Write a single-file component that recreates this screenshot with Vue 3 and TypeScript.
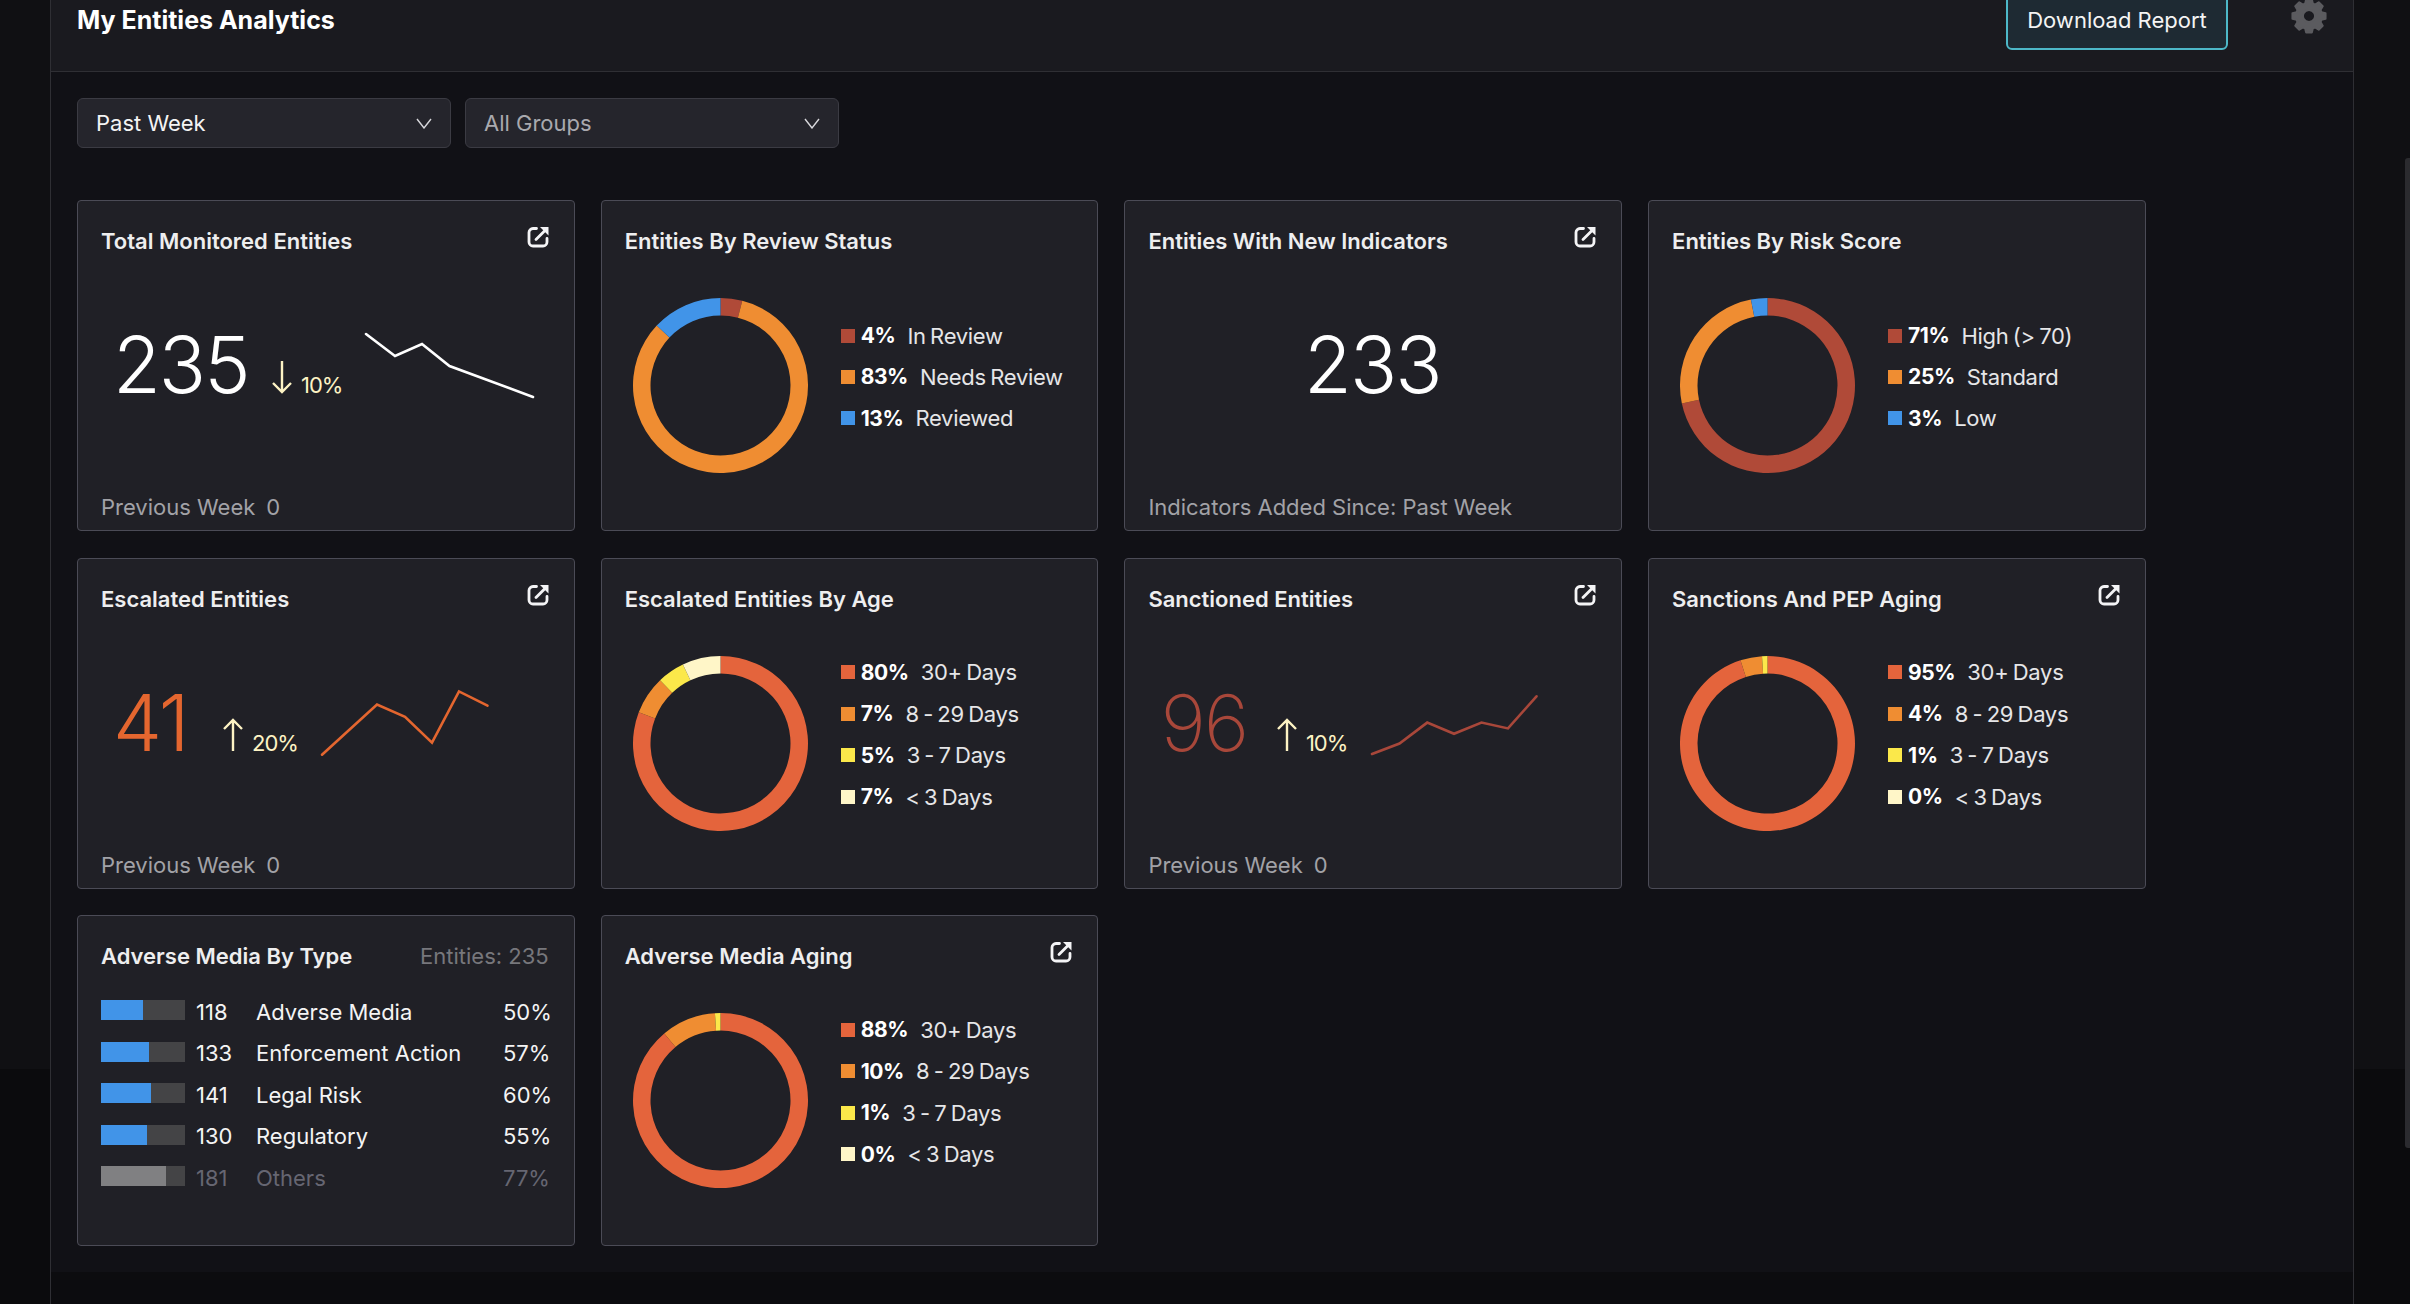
<template>
  <div class="page">
    <div class="panel">
      <header class="panel-head">
        <h1 class="page-title">My Entities Analytics</h1>
        <button class="download">Download Report</button>
        <svg class="gear" viewBox="0 0 36 36" width="36" height="36">
          <path
            fill="#5b5b5f"
            stroke="#5b5b5f"
            stroke-width="2"
            stroke-linejoin="round"
            fill-rule="evenodd"
            :d="gearPath()"
          />
        </svg>
      </header>

      <div class="content">
        <div class="filters">
          <div v-for="f in filters" :key="f.label" class="select" :class="{ muted: f.muted }">
            <span>{{ f.label }}</span>
            <svg viewBox="0 0 16 11" width="16" height="11">
              <path d="M1 1l7 9 7-9" fill="none" stroke="#d8d8dc" stroke-width="1.400" />
            </svg>
          </div>
        </div>

        <div class="grid">
          <section v-for="card in cards" :key="card.title" class="card">
            <div class="card-head">
              <h2 class="card-title">{{ card.title }}</h2>
              <span v-if="card.kind === 'bars'" class="entities">{{ card.note }}</span>
              <svg v-else-if="card.link" class="ext" viewBox="0 0 22 22" width="22" height="22">
                <path
                  d="M9.500 2.500H6A4 4 0 0 0 2 6.500V16a4 4 0 0 0 4 4h10a4 4 0 0 0 4-4v-3.500"
                  fill="none"
                  stroke="#f4f4f6"
                  stroke-width="2.800"
                  stroke-linecap="round"
                />
                <path d="M9 13.500L18 4.500" fill="none" stroke="#f4f4f6" stroke-width="2.800" stroke-linecap="round" />
                <path d="M13 1H21.500V9.500z" fill="#f4f4f6" />
              </svg>
            </div>

            <div v-if="card.kind === 'stat'" class="stat" :style="statColumns(card)">
              <span class="big" :style="{ color: card.color, fontWeight: card.weight }">{{ card.value }}</span>
              <span v-if="card.delta" class="delta">
                <svg viewBox="0 0 22 34" width="22" height="34">
                  <path
                    :d="card.up ? 'M11 33V2M2 11l9-9 9 9' : 'M11 1v31M2 23l9 9 9-9'"
                    fill="none"
                    stroke="#fdf3c4"
                    stroke-width="2.400"
                  />
                </svg>
                <span class="delta-text">{{ card.delta }}</span>
              </span>
              <svg v-if="card.spark" :width="card.sparkW" height="90" class="spark">
                <polyline
                  :points="card.spark"
                  fill="none"
                  :stroke="card.sparkColor"
                  stroke-width="2.600"
                  stroke-linecap="round"
                />
              </svg>
            </div>

            <div v-if="card.kind === 'center'" class="center-num">{{ card.value }}</div>

            <div v-if="card.kind === 'donut'" class="donut-body">
              <svg class="donut" viewBox="0 0 175 175" width="175" height="175">
                <path
                  v-for="(s, i) in card.segments"
                  :key="i"
                  v-show="s.pct > 0"
                  :d="arcPath(card, i)"
                  :fill="s.color"
                />
              </svg>
              <ul class="legend">
                <li v-for="s in card.segments" :key="s.label">
                  <i class="swatch" :style="{ background: s.color }"></i>
                  <b>{{ s.pct }}%</b>
                  <span>{{ s.label }}</span>
                </li>
              </ul>
            </div>

            <ul v-if="card.kind === 'bars'" class="bars">
              <li v-for="b in card.bars" :key="b.label" :class="{ dim: b.dim }">
                <span class="track"><span class="fill" :style="{ width: b.pct + '%' }"></span></span>
                <span class="count">{{ b.count }}</span>
                <span class="bar-label">{{ b.label }}</span>
                <span class="bar-pct">{{ b.pct }}%</span>
              </li>
            </ul>

            <p v-if="card.foot" class="foot">
              {{ card.foot }}<span v-if="card.footNum" class="foot-num">{{ card.footNum }}</span>
            </p>
          </section>
        </div>
      </div>
    </div>
    <div class="scroll-thumb"></div>
  </div>
</template>

<script setup lang="ts">
  interface Segment {
    pct: number;
    label: string;
    color: string;
  }

  interface Bar {
    count: number;
    label: string;
    pct: number;
    dim?: boolean;
  }

  interface Card {
    title: string;
    kind: "stat" | "center" | "donut" | "bars";
    link?: boolean;
    value?: string;
    color?: string;
    weight?: number;
    delta?: string;
    up?: boolean;
    spark?: string;
    sparkW?: number;
    sparkColor?: string;
    numW?: number;
    deltaW?: number;
    foot?: string;
    footNum?: string;
    note?: string;
    segments?: Segment[];
    bars?: Bar[];
  }

  const RED = "#b04a38";
  const ORANGE = "#ef8d32";
  const BLUE = "#4194e8";
  const CORAL = "#e4643c";
  const YELLOW = "#fbe84a";
  const CREAM = "#fff6c8";

  const filters = [
    { label: "Past Week", muted: false },
    { label: "All Groups", muted: true },
  ];

  function ages(a: number, b: number, c: number, d: number): Segment[] {
    return [
      { pct: a, label: "30+ Days", color: CORAL },
      { pct: b, label: "8 - 29 Days", color: ORANGE },
      { pct: c, label: "3 - 7 Days", color: YELLOW },
      { pct: d, label: "< 3 Days", color: CREAM },
    ];
  }

  const cards: Card[] = [
    {
      title: "Total Monitored Entities",
      kind: "stat",
      link: true,
      value: "235",
      color: "#ffffff",
      delta: "10%",
      up: false,
      spark: "3,14 32,36 59,24 86.5,46 170,77",
      sparkW: 174,
      sparkColor: "#ffffff",
      numW: 170,
      deltaW: 92,
      foot: "Previous Week",
      footNum: "0",
    },
    {
      title: "Entities By Review Status",
      kind: "donut",
      segments: [
        { pct: 4, label: "In Review", color: RED },
        { pct: 83, label: "Needs Review", color: ORANGE },
        { pct: 13, label: "Reviewed", color: BLUE },
      ],
    },
    {
      title: "Entities With New Indicators",
      kind: "center",
      link: true,
      value: "233",
      foot: "Indicators Added Since: Past Week",
    },
    {
      title: "Entities By Risk Score",
      kind: "donut",
      segments: [
        { pct: 71, label: "High (> 70)", color: RED },
        { pct: 25, label: "Standard", color: ORANGE },
        { pct: 3, label: "Low", color: BLUE },
      ],
    },
    {
      title: "Escalated Entities",
      kind: "stat",
      link: true,
      value: "41",
      color: "#e4662f",
      delta: "20%",
      up: true,
      spark: "3,76.700 58,26.600 86,38.800 113,64.600 140,13.400 168.500,27.600",
      sparkW: 172,
      sparkColor: "#e4662f",
      numW: 121,
      deltaW: 97,
      foot: "Previous Week",
      footNum: "0",
    },
    { title: "Escalated Entities By Age", kind: "donut", segments: ages(80, 7, 5, 7) },
    {
      title: "Sanctioned Entities",
      kind: "stat",
      link: true,
      value: "96",
      color: "#a8473a",
      weight: 200,
      delta: "10%",
      up: true,
      spark: "3,76 30.500,65.500 58.200,44.600 85,55.800 112.500,44.600 139,50.400 167.500,18.300",
      sparkW: 171,
      sparkColor: "#a8473a",
      numW: 127.5,
      deltaW: 93,
      foot: "Previous Week",
      footNum: "0",
    },
    { title: "Sanctions And PEP Aging", kind: "donut", link: true, segments: ages(95, 4, 1, 0) },
    {
      title: "Adverse Media By Type",
      kind: "bars",
      note: "Entities: 235",
      bars: [
        { count: 118, label: "Adverse Media", pct: 50 },
        { count: 133, label: "Enforcement Action", pct: 57 },
        { count: 141, label: "Legal Risk", pct: 60 },
        { count: 130, label: "Regulatory", pct: 55 },
        { count: 181, label: "Others", pct: 77, dim: true },
      ],
    },
    { title: "Adverse Media Aging", kind: "donut", link: true, segments: ages(88, 10, 1, 0) },
  ];

  function statColumns(card: Card) {
    return { gridTemplateColumns: `${card.numW}px ${card.deltaW}px auto` };
  }

  // eight-toothed cog with a round hole, centred in its 36 box
  function gearPath(): string {
    const pts: string[] = [];
    for (let i = 0; i < 8; i++) {
      const mid = (i * Math.PI) / 4;
      const corners: [number, number][] = [
        [13, -0.3],
        [16.8, -0.17],
        [16.8, 0.17],
        [13, 0.3],
      ];
      for (const [r, off] of corners) {
        const a = mid + off;
        pts.push(`${(18 + r * Math.sin(a)).toFixed(2)} ${(18 - r * Math.cos(a)).toFixed(2)}`);
      }
    }
    return `M ${pts.join(" L ")} Z M 18 12 a 6 6 0 1 0 0.01 0 Z`;
  }

  // one ring segment, clockwise from 12 o'clock
  function arcPath(card: Card, index: number): string {
    const segs = card.segments ?? [];
    const total = segs.reduce((sum, s) => sum + s.pct, 0);
    const before = segs.slice(0, index).reduce((sum, s) => sum + s.pct, 0);
    const a0 = (before / total) * Math.PI * 2;
    const a1 = ((before + segs[index].pct) / total) * Math.PI * 2;
    const C = 87.5;
    const R = 87.5;
    const r = 70;
    const pt = (rad: number, a: number) =>
      `${(C + rad * Math.sin(a)).toFixed(2)} ${(C - rad * Math.cos(a)).toFixed(2)}`;
    const large = a1 - a0 > Math.PI ? 1 : 0;
    return `M ${pt(R, a0)} A ${R} ${R} 0 ${large} 1 ${pt(R, a1)} L ${pt(r, a1)} A ${r} ${r} 0 ${large} 0 ${pt(r, a0)} Z`;
  }
</script>

<style>
  html,
  body {
    margin: 0;
    background: #0e0e11;
    overflow: hidden;
  }
</style>

<style scoped>
  .page {
    position: relative;
    height: 1304px;
    overflow: hidden;
    padding-left: 50px;
    box-sizing: border-box;
    background: linear-gradient(#101013 0, #101013 1069px, #0b0b0d 1069px);
    font-family: Inter, "Liberation Sans", sans-serif;
    color: #f2f2f4;
  }

  .panel {
    width: 2304px;
    height: 1304px;
    box-sizing: border-box;
    border-left: 1px solid #2f2f34;
    border-right: 1px solid #2f2f34;
    background: #0c0c0f;
  }

  .panel-head {
    height: 72px;
    box-sizing: border-box;
    display: flex;
    align-items: flex-start;
    padding: 0 26px;
    background: #1a1a1f;
    border-bottom: 1px solid #2f2f34;
  }

  .page-title {
    margin: 3px auto 0 0;
    font-size: 25px;
    line-height: 34px;
    font-weight: 700;
    color: #ffffff;
  }

  .download {
    width: 222px;
    height: 61px;
    margin: -11px 0 0;
    padding: 0;
    border: 2px solid #4db8c8;
    border-radius: 6px;
    background: #1e2a33;
    color: #f4f4f4;
    font: 400 22px Inter, "Liberation Sans", sans-serif;
  }

  .gear {
    margin: -2px 0 0 63px;
  }

  .content {
    box-sizing: border-box;
    height: 1200px;
    padding: 26px;
    background: #111116;
  }

  .filters {
    display: flex;
    gap: 14px;
    margin-bottom: 52px;
  }

  .select {
    width: 374px;
    height: 50px;
    box-sizing: border-box;
    display: flex;
    align-items: center;
    justify-content: space-between;
    padding: 0 18px 0 18px;
    background: #25252c;
    border: 1px solid #3b3b43;
    border-radius: 6px;
    font-size: 22px;
    color: #f4f4f4;
  }

  .select.muted {
    color: #a9a9ae;
  }

  .grid {
    display: grid;
    grid-template-columns: repeat(4, 497.7px);
    grid-auto-rows: 331px;
    gap: 26.5px 26px;
  }

  .card {
    display: flex;
    flex-direction: column;
    box-sizing: border-box;
    padding: 0 25px 0 23px;
    background: #202026;
    border: 1px solid #4b4b56;
    border-radius: 4px;
  }

  .card-head {
    display: flex;
    justify-content: space-between;
    align-items: flex-start;
    padding-top: 27px;
    height: 26px;
    flex: none;
    box-sizing: content-box;
  }

  .card-title {
    margin: 0;
    font-size: 22px;
    line-height: 26px;
    font-weight: 600;
    color: #eeeeef;
  }

  .entities {
    font-size: 22px;
    line-height: 26px;
    color: #77777c;
  }

  .ext {
    margin-top: -2px;
  }

  .stat {
    display: grid;
    height: 90px;
    margin-top: 66px;
    align-items: start;
  }

  .big {
    padding-left: 12px;
    font-size: 78px;
    line-height: 90px;
    font-weight: 300;
    letter-spacing: -2px;
  }

  .delta {
    display: flex;
    align-items: flex-end;
    gap: 8px;
    height: 74px;
  }

  .delta-text {
    margin-bottom: -4px;
    font-size: 22px;
    line-height: 26px;
    letter-spacing: -1px;
    color: #fdf3c4;
  }

  .center-num {
    height: 90px;
    margin-top: 66px;
    text-align: center;
    font-size: 78px;
    line-height: 90px;
    font-weight: 300;
    letter-spacing: -2px;
    color: #ffffff;
  }

  .foot {
    margin: auto 0 0;
    padding-bottom: 10px;
    font-size: 22px;
    line-height: 26px;
    color: #a2a2a7;
  }

  .foot-num {
    margin-left: 11px;
  }

  .donut-body {
    display: flex;
    align-items: center;
    margin: 44px 0 0 8px;
    height: 175px;
  }

  .donut {
    flex: none;
  }

  .legend {
    list-style: none;
    margin: 0 0 0 33px;
    padding: 0 0 17px;
  }

  .legend li {
    display: flex;
    align-items: center;
    height: 41.4px;
    font-size: 22px;
    letter-spacing: -0.3px;
    word-spacing: -1.5px;
    color: #e6e6e8;
    white-space: nowrap;
  }

  .swatch {
    width: 14px;
    height: 14px;
    margin-right: 6px;
    flex: none;
  }

  .legend b {
    margin-right: 12px;
    font-size: 21px;
    font-weight: 700;
    color: #ffffff;
    letter-spacing: -0.4px;
  }

  .bars {
    list-style: none;
    margin: 22px 0 0;
    padding: 0;
  }

  .bars li {
    display: flex;
    align-items: center;
    height: 41.5px;
    font-size: 22px;
    color: #f4f4f4;
  }

  .bars li.dim {
    color: #666672;
  }

  .track {
    width: 84px;
    height: 20px;
    margin-top: -3px;
    flex: none;
    background: #444446;
  }

  .fill {
    display: block;
    height: 100%;
    background: #4194e8;
  }

  .dim .fill {
    background: #808082;
  }

  .count {
    width: 60px;
    margin-left: 11px;
    flex: none;
  }

  .bar-label {
    width: 247px;
    flex: none;
  }

  .scroll-thumb {
    position: absolute;
    top: 158px;
    left: 2405px;
    width: 5px;
    height: 990px;
    background: #2b2b2f;
    border-radius: 3px 0 0 3px;
  }
</style>
